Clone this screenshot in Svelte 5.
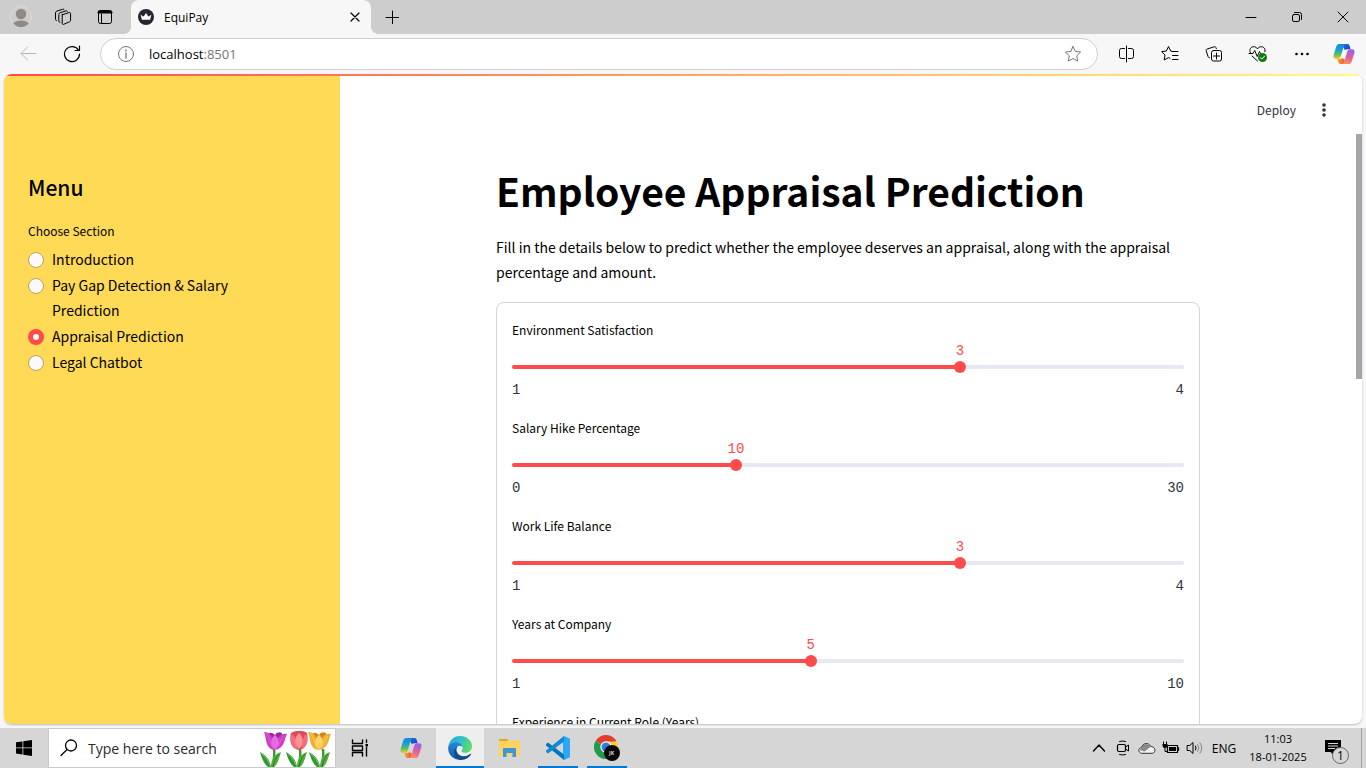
<script>
  const sections = ['Introduction', 'Pay Gap Detection & Salary Prediction', 'Appraisal Prediction', 'Legal Chatbot'];
  let section = $state('Appraisal Prediction');

  let sliders = $state([
    { id: 'environment', label: 'Environment Satisfaction', min: 1, max: 4, value: 3 },
    { id: 'hike', label: 'Salary Hike Percentage', min: 0, max: 30, value: 10 },
    { id: 'balance', label: 'Work Life Balance', min: 1, max: 4, value: 3 },
    { id: 'years', label: 'Years at Company', min: 1, max: 10, value: 5 }
  ]);
  let roleYears = $state(0);

  const fill = (s) => ((s.value - s.min) / (s.max - s.min)) * 100;
</script>

{#snippet copilot()}
  <svg width="22" height="22" viewBox="0 0 22 22" aria-hidden="true">
    <defs>
      <linearGradient id="cpA" x1="0" y1="0" x2="0" y2="1">
        <stop offset="0" stop-color="#1486e4" /><stop offset=".4" stop-color="#18a0d0" /><stop offset=".7" stop-color="#62bd62" /><stop offset="1" stop-color="#f2cf1c" />
      </linearGradient>
      <linearGradient id="cpB" x1="0.3" y1="0" x2="0" y2="1">
        <stop offset="0" stop-color="#a45fe4" /><stop offset=".45" stop-color="#e0609c" /><stop offset="1" stop-color="#ff9a5c" />
      </linearGradient>
      <linearGradient id="cpC" x1="0" y1="0" x2="1" y2="1">
        <stop offset="0" stop-color="#1b6fe0" /><stop offset="1" stop-color="#0f43b8" />
      </linearGradient>
      <linearGradient id="cpD" x1="0" y1="0" x2="1" y2="0">
        <stop offset="0" stop-color="#f7a928" /><stop offset="1" stop-color="#f0523c" />
      </linearGradient>
    </defs>
    <path d="M11 1h3.400c1.400 0 2 .9 2.300 2l.9 3.200h-2.800c-1.400 0-2.200.3-2.800 1L10 4z" fill="url(#cpC)" />
    <path d="M11 21H7.800c-1.400 0-2.100-.9-2.500-2.100L4.500 16h2.300c1.200 0 2-.4 2.600-1L12 17z" fill="url(#cpD)" />
    <path d="M6.600 1h6.200c-1.200.3-1.700 1.300-2.100 2.600L7.900 13c-.6 1.900-1.400 3-3 3H3C.8 16 0 14.300.6 12.100L3.300 3.600C3.900 1.800 4.900 1 6.600 1z" fill="url(#cpA)" />
    <path d="M15.400 21H9.200c1.200-.3 1.700-1.300 2.100-2.600L14.100 9c.6-1.900 1.400-2.800 3-2.800H19c2.200 0 3 1.700 2.400 3.700l-2.700 8.500c-.6 1.800-1.600 2.600-3.300 2.600z" fill="url(#cpB)" />
  </svg>
{/snippet}

{#snippet leaves(x)}
  <g transform="translate({x} 0)">
    <path d="M0 19 Q1 30-2 37" stroke="#3f9a2c" stroke-width="2.500" fill="none" />
    <path d="M-3 37C-4 30-8 25-14 22c2 7 4 12 8 15z" fill="#2f9a34" />
    <path d="M-3 37C-3 29 1 24 7 22 5 28 4 34 0 37z" fill="#53ae3a" />
    <path d="M-3 37C-5 32-8 27-12 24" stroke="#7acb4e" fill="none" />
    <path d="M-1 37C0 31 2 27 5 24" stroke="#217a2c" fill="none" />
  </g>
{/snippet}

{#snippet bloom(x, light, mid, dark)}
  <g transform="translate({x} 0)">
    <path d="M-6 3Q-3 2 0 5 2 1 7 3L7 12 0 18-6 12z" fill={dark} />
    <path d="M-11 2C-6 2-4 5-2 9L0 20C-10 19-8 9-11 2z" fill={mid} />
    <path d="M12 4C7 3 4 6 2 10L0 20C10 18 9 10 12 4z" fill={mid} />
    <path d="M0 5C5 9 5 15 0 20-5 15-5 9 0 5z" fill={light} />
    <path d="M-9 4C-5 6-5 13-2 18M9 6C6 8 5 13 3 17" stroke={light} stroke-width=".8" fill="none" />
  </g>
{/snippet}

<div class="desktop">
  <header class="tabs">
    <button class="tile" aria-label="Profile">
      <svg width="22" height="22" viewBox="0 0 22 22"><circle cx="11" cy="11" r="10.500" fill="#d0ccc8" stroke="#dedbd8" /><circle cx="11" cy="8" r="5.200" fill="#8f8a86" /><path d="M3.300 17.500C5 15.300 8 14.600 11 14.600s6 .7 7.700 2.900A10.300 10.300 0 0 1 11 21.300a10.300 10.300 0 0 1-7.700-3.800z" fill="#8f8a86" /></svg>
    </button>
    <button class="tile" aria-label="Workspaces">
      <svg width="18" height="18" viewBox="0 0 18 18" class="line"><path d="M8.300 6.700 15 4.600c.9-.3 1.600.2 1.600 1.100v6.500c0 .7-.4 1.300-1.100 1.600l-5.700 2.500c-.9.4-1.600-.1-1.600-1V8c0-.6.1-1.100.1-1.300z" /><path d="M5.900 14.300c-.7.1-1.100-.4-1.100-1.100V6.500c0-.9.5-1.500 1.300-1.800L12 2.900c.7-.2 1.200 0 1.500.5" /><path d="M2.600 12.500c-.7.1-1.100-.4-1.100-1.100V4.900c0-.9.5-1.500 1.300-1.800l5.900-1.800c.7-.2 1.200 0 1.500.5" /></svg>
    </button>
    <button class="tile" aria-label="Tab actions">
      <svg width="16" height="16" viewBox="0 0 16 16" class="line"><rect x="1.500" y="1.500" width="13" height="13" rx="2" /><path d="M1.500 3.500h13M2 2.500h12" stroke-width="2.200" /><path d="M4.500 5v9" /></svg>
    </button>
    <div class="tab">
      <svg width="16" height="16" viewBox="0 0 16 16" aria-hidden="true"><circle cx="8" cy="8" r="8" fill="#262730" /><path d="M2.600 5.600 5 7.400l1-.3L8 4l2 3.100 1 .3 2.400-1.800-1.300 5.200H3.900z" fill="#fff" /></svg>
      <span>EquiPay</span>
      <button aria-label="Close tab"><svg width="10" height="10" viewBox="0 0 10 10" class="line"><path d="m1 1 8 8M9 1 1 9" stroke-width="1.200" /></svg></button>
    </div>
    <button class="tile" aria-label="New tab"><svg width="14" height="14" viewBox="0 0 14 14" class="line"><path d="M7.500 1v13M1 7.500h13" /></svg></button>
    <div class="window-buttons">
      <button aria-label="Minimize"><svg width="12" height="12" viewBox="0 0 12 12" class="line"><path d="M1 6.500h10" /></svg></button>
      <button aria-label="Restore"><svg width="12" height="12" viewBox="0 0 12 12" class="line"><rect x="1.500" y="3.500" width="7" height="7" rx="1.500" /><path d="M3.500 1.500h5a2 2 0 0 1 2 2v5" /></svg></button>
      <button aria-label="Close"><svg width="12" height="12" viewBox="0 0 12 12" class="line"><path d="m1 1 10 10M11 1 1 11" /></svg></button>
    </div>
  </header>

  <nav class="toolbar" aria-label="Browser">
    <button class="tool faded" aria-label="Back"><svg width="18" height="16" viewBox="0 0 18 16" class="line"><path d="M17 7.500H2M8.500 1 2 7.500 8.500 14" /></svg></button>
    <button class="tool" aria-label="Refresh"><svg width="18" height="18" viewBox="0 0 18 18" class="line"><path d="M15.600 5.500A7.500 7.500 0 1 0 16.500 9M16.500 1v4.500h-4.500" stroke-width="1.200" /></svg></button>
    <div class="address">
      <svg width="18" height="18" viewBox="0 0 18 18" class="line grey"><circle cx="9" cy="9" r="7.500" /><path d="M9 8v5M9 5v1" stroke-width="1.300" /></svg>
      <a href="#top">localhost<span>:8501</span></a>
      <button aria-label="Add to favorites"><svg width="18" height="18" viewBox="0 0 18 18" class="line grey"><path d="m9 1.500 2.300 4.900 5.300.7-3.900 3.700 1 5.300L9 13.500l-4.700 2.600 1-5.300-3.900-3.700 5.300-.7z" /></svg></button>
    </div>
    <button class="tool" aria-label="Split screen"><svg width="17" height="18" viewBox="0 0 17 18" class="line"><path d="M8.500 1v16M6.500 3.500h-3a2 2 0 0 0-2 2v6a2 2 0 0 0 2 2h3M10.500 3.500h3a2 2 0 0 1 2 2v6a2 2 0 0 1-2 2h-3" /></svg></button>
    <button class="tool" aria-label="Favorites"><svg width="18" height="18" viewBox="0 0 18 18" class="line"><path d="M11 6.300 9.700 6 7.500 1.500 5.300 6l-4.600.7L4 10l-.8 5L7.500 12.600l1.500.8M11 6.500h6M11.500 10.500H17M11.500 14.500H17" /></svg></button>
    <button class="tool" aria-label="Collections"><svg width="18" height="18" viewBox="0 0 18 18" class="line"><rect x="6.500" y="5.500" width="10" height="10.500" rx="2" /><path d="M11.500 8v6M8.500 11h6M4.500 12.700c-.8 0-1.200-.4-1.500-1.200L1.200 5.800c-.2-.9.1-1.500 1-1.800l7-2.200c.9-.3 1.500.1 1.800.9l.3.9" /></svg></button>
    <button class="tool" aria-label="Browser essentials"><svg width="20" height="18" viewBox="0 0 20 18" class="line"><path d="M2.300 7.500C1 4.500 2.800 1.700 5.600 1.700c1.800 0 3 .8 3.900 2.100.9-1.300 2.100-2.100 3.900-2.100 2.500 0 4.300 2.400 3.500 5M1 8.500h4l1.700-3 2.500 6 2.300-5L12.500 8.500M4 11l5.500 5" /><circle cx="14.500" cy="12.500" r="4.500" fill="#107c10" stroke="none" /><path d="m12.300 12.600 1.500 1.500 2.800-3" stroke="#fff" /></svg></button>
    <button class="tool" aria-label="Settings and more"><svg width="14" height="4" viewBox="0 0 14 4"><circle cx="1.500" cy="2" r="1.300" /><circle cx="7" cy="2" r="1.300" /><circle cx="12.500" cy="2" r="1.300" /></svg></button>
    <button class="tool" aria-label="Copilot">{@render copilot()}</button>
  </nav>

  <div class="page" id="top">
    <aside>
      <h2>Menu</h2>
      <fieldset>
        <legend>Choose Section</legend>
        {#each sections as name}
          <label><input type="radio" name="section" value={name} bind:group={section} /><span>{name}</span></label>
        {/each}
      </fieldset>
    </aside>

    <div class="app">
      <div class="app-header">
        <button>Deploy</button>
        <button aria-label="Main menu"><svg width="4" height="14" viewBox="0 0 4 14" fill="#31333f"><circle cx="2" cy="2" r="1.800" /><circle cx="2" cy="7" r="1.800" /><circle cx="2" cy="12" r="1.800" /></svg></button>
      </div>
      <div class="scroller">
        <main>
          <h1>Employee Appraisal Prediction</h1>
          <p>Fill in the details below to predict whether the employee deserves an appraisal, along with the appraisal percentage and amount.</p>
          <form>
            {#each sliders as s}
              <div class="slider">
                <label for={s.id}>{s.label}</label>
                <div class="value"><output for={s.id} style="left: {fill(s)}%">{s.value}</output></div>
                <div class="range" style="--fill: {fill(s)}%">
                  <input id={s.id} type="range" min={s.min} max={s.max} bind:value={s.value} />
                </div>
                <div class="limits"><span>{s.min}</span><span>{s.max}</span></div>
              </div>
            {/each}
            <div class="slider">
              <label for="role">Experience in Current Role (Years)</label>
              <div class="value"></div>
              <div class="range" style="--fill: 0%"><input id="role" type="range" bind:value={roleYears} /></div>
            </div>
          </form>
        </main>
        <div class="scrollbar"><div></div></div>
      </div>
    </div>
  </div>

  <footer class="taskbar">
    <button class="start" aria-label="Start"><svg width="16" height="16" viewBox="0 0 16 16"><path d="M0 2.300 6.500 1.400v6.100H0zM7.300 1.300 16 0v7.500H7.300zM0 8.300h6.500v6.200L0 13.600zM7.300 8.300H16V16l-8.700-1.300z" /></svg></button>
    <label class="search">
      <svg width="18" height="18" viewBox="0 0 18 18" class="line"><circle cx="11" cy="6.500" r="5.500" stroke-width="1.300" /><path d="M7 10.500 1 16.500" stroke-width="1.300" /></svg>
      <input type="text" placeholder="Type here to search" aria-label="Search" />
      <svg width="72" height="37" viewBox="0 0 72 37" aria-hidden="true">
        {@render leaves(15)}
        {@render leaves(41)}
        {@render leaves(64)}
        {@render bloom(16, '#e66be0', '#cc3fc6', '#9a279f')}
        <g transform="translate(40 0)">
          <path d="M-8 3C-3 0 4 0 8 3 10 12 7 19 0 20-8 19-10 11-8 3z" fill="#dd4b58" />
          <path d="M-7 4C-3 6-2 14-2 19-9 17-9 9-7 4zM7 4C4 6 3 14 3 19 9 16 9 9 7 4z" fill="#f2707a" />
          <path d="M0 3C5 7 5 15 0 19-5 15-5 7 0 3z" fill="#fb9296" />
        </g>
        {@render bloom(60, '#fdd267', '#eeb02f', '#d08716')}
      </svg>
    </label>
    <div class="apps">
      <button aria-label="Task view"><svg width="18" height="18" viewBox="0 0 18 18" class="line" stroke-width="1.400"><path d="M1.500 1v3.500h10V1M1.500 17v-3.500h10V17M1.500 7h10v4.500h-10zM15.500 1v2.500M15.500 8.500V17" /><rect x="14.500" y="5" width="2.500" height="2.500" fill="#000" stroke="none" /></svg></button>
      <button aria-label="Copilot">{@render copilot()}</button>
      <button class="open active" aria-label="Microsoft Edge">
        <svg width="24" height="24" viewBox="0 0 24 24">
          <defs>
            <linearGradient id="edA" x1="0" y1=".2" x2="1" y2=".5"><stop offset="0" stop-color="#2aa6e0" /><stop offset=".5" stop-color="#2fc2c9" /><stop offset="1" stop-color="#62dd5c" /></linearGradient>
            <linearGradient id="edB" x1="0" y1="0" x2="0" y2="1"><stop offset="0" stop-color="#1f8fd8" /><stop offset="1" stop-color="#0c59a4" /></linearGradient>
          </defs>
          <path d="M.2 11C1 4.500 5.700 0 12 0c7.200 0 12 5 12 10.300 0 4-3 6.500-6.300 6.500-2.600 0-4.300-.9-4.300-1.900 0-.6 1.300-1 1.300-3.200C14.700 8.500 11.500 6 8 6 4 6 1 8.300.2 11z" fill="url(#edA)" />
          <path d="M.1 12.300C.1 8.600 3.400 6 8 6c3.800 0 6.700 2.700 6.700 5.500-.4-1-1.500-1.700-2.900-1.700-2.500 0-4 2.600-3.700 5.200.4 3.700 3.200 7 7.300 7.600-1 .9-2.200 1.300-3.400 1.300C5.500 23.900.1 18.500.1 12.300z" fill="url(#edB)" />
          <path d="M9.300 11c-2.400 3 .2 9.300 6.500 9.300 3.500 0 5.500-1.700 6.700-2.500.5-.3.900.2.600.7-2.200 3.400-5.700 5.300-9.700 5.400C8 23.300 6 19.300 6.200 15.900c.1-2.100 1.300-4.200 3.100-4.900z" fill="#114a8b" />
        </svg>
      </button>
      <button aria-label="File Explorer"><svg width="22" height="20" viewBox="0 0 22 20"><path d="M1 3V2q0-1 1-1h7l2 2z" fill="#e09f14" /><path d="M1 2.800h20q1 0 1 1V18H1z" fill="#ffd35c" /><path d="M5 11q0-1 1-1h11q1 0 1 1v8h-3.500v-4h-6v4H5z" fill="#3a96dd" /></svg></button>
      <button class="open" aria-label="Visual Studio Code"><svg width="24" height="24" viewBox="0 0 24 24"><path d="M18 0 24 2.800v18.400L18 24l-1-1V1z" fill="#2aa8f5" /><path d="M0 8.200 2 6.500l16 12V24L0 9.600z" fill="#0873bb" /><path d="M0 15.800 2 17.500l16-12V0L0 14.400z" fill="#1389d3" /></svg></button>
      <button class="open" aria-label="Google Chrome">
        <svg width="26" height="26" viewBox="0 0 26 26"><path d="M12 12 1.600 6A12 12 0 0 1 22.400 6z" fill="#df3e33" /><path d="M12 12 1.600 6a12 12 0 0 0 10.400 18l5-9z" fill="#219a4b" /><path d="M12 6.500h10.700A12 12 0 0 1 12 24l5-9z" fill="#fccb2d" /><circle cx="12" cy="12" r="5.700" fill="#fff" /><circle cx="12" cy="12" r="4.500" fill="#2f7de1" /><circle cx="18" cy="18" r="8" fill="#080808" /></svg>
        <small>JK</small>
      </button>
    </div>
    <div class="tray">
      <button aria-label="Show hidden icons"><svg width="14" height="14" viewBox="0 0 14 14" class="line"><path d="m1.500 10 5.500-6 5.500 6" stroke-width="1.400" /></svg></button>
      <button aria-label="Meet now"><svg width="14" height="16" viewBox="0 0 14 16" class="line"><path d="M3.500 1.500q3-1.200 6 0M3.500 14.500q3 1.200 6 0M9.500 7 12.500 5v6l-3-2" /><rect x="1.500" y="4.500" width="8" height="7" rx="1.500" stroke-width="1.200" /></svg></button>
      <button aria-label="OneDrive"><svg width="18" height="12" viewBox="0 0 18 12"><path d="M3.500 11.300C-.5 10.500.5 5.600 3.600 5.500 4.500.7 11 .1 12.700 4.500c4.800-.1 5.600 6 1.800 6.800z" fill="#f2f2f2" stroke="#333" stroke-width="1" /><path d="M3.500 6C4.500 1 10.500.6 12.400 4.900L6.500 9.500 1.700 8z" fill="#888" /></svg></button>
      <button aria-label="Battery"><svg width="18" height="14" viewBox="0 0 18 14" class="line"><path d="M5.500 4.500h10v7h-10zM16.500 6.500v3" stroke-width="1.200" /><path d="M7 6h7v4H7z" fill="#000" stroke="none" /><path d="M1.500 1v2.500M4.500 1v2.500M3 7v3.500h2" /><path d="M.5 3h5v2q0 2-2.500 2T.5 5z" fill="#000" stroke="none" /></svg></button>
      <button aria-label="Volume"><svg width="18" height="14" viewBox="0 0 18 14" class="line"><path d="M1.500 4.500h2.300L7 1.500v11L3.800 9.500H1.500zM9.500 5q1.300 2 0 4" /><path d="M11.700 3.500q2.400 3.500 0 7M14 1.800q3.600 5.200 0 10.400" stroke="#888" /></svg></button>
      <span class="lang">ENG</span>
      <div class="clock"><time>11:03</time><time>18-01-2025</time></div>
      <button class="notes" aria-label="Notifications">
        <svg width="16" height="16" viewBox="0 0 16 16"><path d="M0 0h16v12H9.500V16L5.500 12H0z" /><path d="M3 3.500h10M3 6h10M3 8.500h7" stroke="#d6d6d6" /></svg>
        <b>1</b>
      </button>
    </div>
  </footer>
</div>

<style>
  :global(body) {
    margin: 0;
  }
  .desktop {
    --ui: 'Open Sans', 'Noto Sans', sans-serif;
    --source: 'Noto Sans CJK SC', 'Noto Sans', sans-serif;
    display: flex;
    flex-direction: column;
    height: 100vh;
    overflow: hidden;
    background: #f7f7f7;
    color: #000;
    font-family: var(--ui);
  }
  button {
    display: flex;
    align-items: center;
    justify-content: center;
    flex: none;
    padding: 0;
    border: 0;
    background: none;
    color: inherit;
    font: inherit;
  }
  svg {
    display: block;
    flex: none;
  }
  .line {
    fill: none;
    stroke: #000;
    stroke-linecap: round;
    stroke-linejoin: round;
  }
  .grey {
    stroke: #767676;
  }

  .tabs {
    display: flex;
    height: 34px;
    flex: none;
    background: #cdcdcd;
  }
  .tile {
    width: 42px;
  }
  .tab {
    display: flex;
    align-items: center;
    gap: 10px;
    width: 240px;
    box-sizing: border-box;
    margin-left: 5px;
    padding: 0 11px 0 7px;
    border-radius: 8px 8px 0 0;
    background: #f7f7f7;
    font-size: 12px;
    position: relative;
  }
  .tab::before,
  .tab::after {
    content: '';
    position: absolute;
    bottom: 0;
    width: 8px;
    height: 8px;
  }
  .tab::before {
    right: 100%;
    background: radial-gradient(circle at 0 0, transparent 8px, #f7f7f7 8px);
  }
  .tab::after {
    left: 100%;
    background: radial-gradient(circle at 100% 0, transparent 8px, #f7f7f7 8px);
  }
  .tab span {
    flex: 1;
  }
  .window-buttons {
    display: flex;
    margin-left: auto;
  }
  .window-buttons button {
    width: 46px;
  }

  .toolbar {
    display: flex;
    align-items: center;
    height: 40px;
    flex: none;
    padding-left: 6px;
  }
  .tool {
    width: 44px;
    height: 32px;
  }
  .tool:last-child {
    width: 42px;
    padding-right: 2px;
    box-sizing: border-box;
  }
  .faded {
    opacity: 0.25;
  }
  .address {
    display: flex;
    align-items: center;
    flex: 1;
    gap: 14px;
    height: 32px;
    box-sizing: border-box;
    margin: 0 6px;
    padding: 0 15px 0 16px;
    border: 1px solid #cfcfcf;
    border-radius: 16px;
    background: #fff;
    font-size: 13px;
  }
  .address a {
    flex: 1;
    color: #000;
    text-decoration: none;
  }
  .address a span {
    color: #767676;
  }

  .page {
    display: flex;
    flex: 1;
    min-height: 0;
    box-sizing: border-box;
    margin: 0 4px 4px;
    border-radius: 8px;
    overflow: hidden;
    background:
      linear-gradient(90deg, #ff4b4b, #fffd80) top / 100% 2px no-repeat,
      #fff;
    box-shadow: 0 1px 2px #bbb;
    font-family: var(--source);
  }
  aside {
    width: 336px;
    flex: none;
    box-sizing: border-box;
    margin-top: 2px;
    padding: 95px 24px 0;
    background: #ffda57;
  }
  h2 {
    margin: 0;
    font-size: 21px;
    font-weight: 500;
    line-height: 32px;
  }
  fieldset {
    display: flex;
    flex-direction: column;
    gap: 1px;
    margin: 17px 0 0;
    padding: 0;
    border: 0;
  }
  legend {
    padding: 0 0 5px;
    font-size: 12px;
    line-height: 22px;
  }
  fieldset label {
    display: flex;
    gap: 8px;
    max-width: 230px;
    font-size: 14px;
    line-height: 25px;
  }
  input[type='radio'] {
    appearance: none;
    flex: none;
    width: 16px;
    height: 16px;
    margin: 5px 0 0;
    border: 1px solid #b9a25a;
    border-radius: 50%;
    background: #fafafc;
  }
  input[type='radio']:checked {
    border: 5px solid #ff4b4b;
  }

  .app {
    display: flex;
    flex-direction: column;
    flex: 1;
    min-width: 0;
  }
  .app-header {
    display: flex;
    align-items: center;
    justify-content: flex-end;
    gap: 26px;
    height: 60px;
    box-sizing: border-box;
    flex: none;
    padding: 12px 36px 0 0;
    color: #31333f;
    font-size: 12px;
    line-height: 16px;
  }
  .scroller {
    display: flex;
    flex: 1;
    min-height: 0;
  }
  main {
    flex: 1;
    box-sizing: border-box;
    max-width: 736px;
    margin: 0 auto;
    padding: 30px 16px;
  }
  h1 {
    margin: 0;
    font-size: 39px;
    font-weight: 700;
    line-height: 53px;
  }
  p {
    margin: 18px 0 17px;
    font-size: 14px;
    line-height: 25px;
  }
  form {
    display: flex;
    flex-direction: column;
    gap: 16px;
    padding: 16px 15px;
    border: 1px solid #d6d6d9;
    border-radius: 8px;
  }
  .slider label {
    display: block;
    font-size: 12px;
    line-height: 22px;
  }
  .value {
    position: relative;
    height: 18px;
    color: #ff4b4b;
    font: 14px/18px 'Liberation Mono', monospace;
  }
  output {
    position: absolute;
    top: 1px;
    transform: translateX(-50%);
  }
  .range {
    display: grid;
    align-items: center;
    height: 16px;
  }
  .range::before {
    content: '';
    grid-area: 1 / 1;
    height: 4px;
    border-radius: 4px;
    background: linear-gradient(90deg, #ff4b4b var(--fill), #e6e9f1 var(--fill));
  }
  .range input {
    appearance: none;
    grid-area: 1 / 1;
    height: 16px;
    margin: 0 -6px;
    background: none;
  }
  .range input::-webkit-slider-thumb {
    appearance: none;
    width: 12px;
    height: 12px;
    border-radius: 50%;
    background: #ff4b4b;
  }
  .limits {
    display: flex;
    justify-content: space-between;
    margin-top: 4px;
    color: #31333f;
    font: 14px/22px 'Liberation Mono', monospace;
  }
  .scrollbar {
    width: 6px;
    flex: none;
  }
  .scrollbar div {
    height: 41.5%;
    background: #a6a6aa;
  }

  .taskbar {
    display: flex;
    height: 40px;
    flex: none;
    background: #d6d6d6;
  }
  .start {
    width: 48px;
  }
  .search {
    display: flex;
    gap: 10px;
    width: 288px;
    box-sizing: border-box;
    padding: 0 4px 0 11px;
    border: 1px solid #cacaca;
    background: #fff;
    align-items: center;
  }
  .search input {
    flex: 1;
    min-width: 0;
    padding: 0;
    border: 0;
    background: none;
    font: 14px var(--ui);
  }
  .search input::placeholder {
    color: #2b2b2b;
  }
  .apps {
    display: flex;
    gap: 1px;
  }
  .apps button {
    position: relative;
    width: 48px;
  }
  .apps button:first-child {
    margin-right: 2px;
  }
  .apps .active {
    background: #eee;
  }
  .open::after {
    content: '';
    position: absolute;
    right: 4px;
    bottom: 0;
    left: 4px;
    height: 2px;
    background: #0078d7;
  }
  .active::after {
    right: 0;
    left: 0;
  }
  .apps small {
    position: absolute;
    top: 21px;
    left: 26px;
    color: #ddd;
    font: 700 5px/8px var(--ui);
  }
  .tray {
    display: flex;
    align-items: center;
    margin-left: auto;
    border-right: 1px solid #a4a4a4;
    margin-right: 4px;
    font-size: 12px;
  }
  .tray button {
    width: 24px;
    height: 40px;
  }
  .lang {
    width: 34px;
    text-align: center;
    font-size: 12px;
  }
  .clock {
    display: flex;
    flex-direction: column;
    width: 74px;
    text-align: center;
    font-size: 11px;
    line-height: 18px;
  }
  .tray .notes {
    position: relative;
    width: 46px;
    padding-right: 10px;
  }
  .notes b {
    position: absolute;
    top: 19px;
    left: 17px;
    width: 15px;
    height: 15px;
    border: 1px solid #666;
    border-radius: 50%;
    background: #d6d6d6;
    font: 12px/15px var(--ui);
  }
</style>
